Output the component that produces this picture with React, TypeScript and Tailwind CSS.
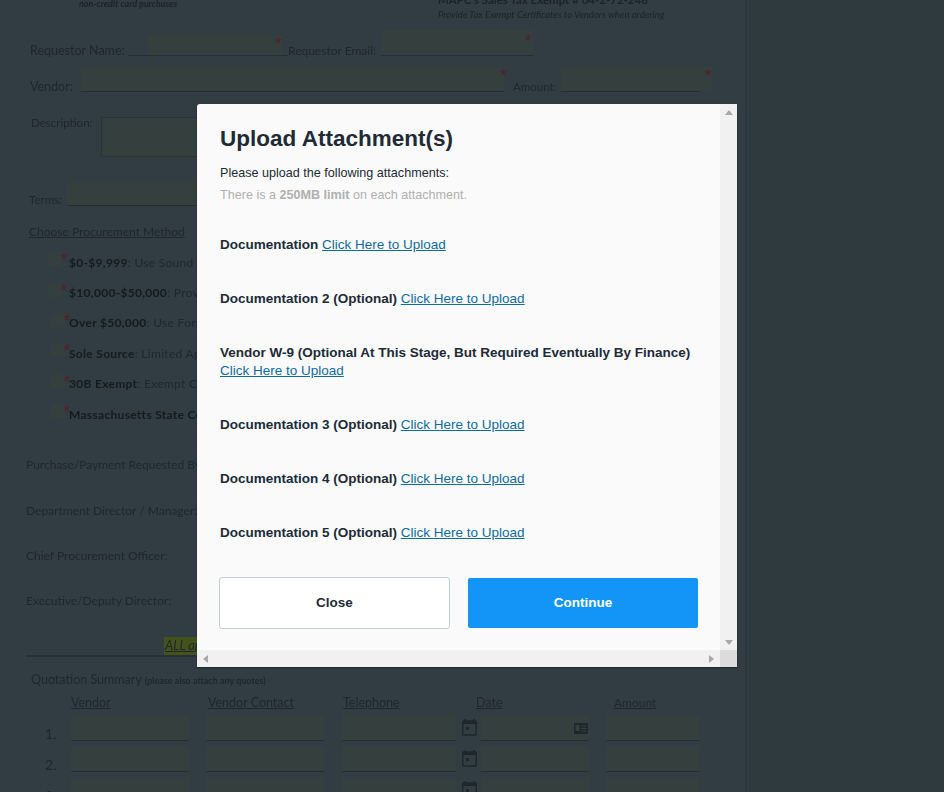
const Star = ({ className }: { className: string }) => (
  <span className={`absolute text-[19px] leading-none text-[#50222d] font-['Liberation_Sans',sans-serif] ${className}`}>*</span>
);

const Field = ({ className, children }: { className: string; children?: React.ReactNode }) => (
  <div className={`relative bg-[#35403e] border-b border-[#242f35] shrink-0 ${className}`}>{children}</div>
);

const CalendarIcon = () => (
  <svg width="15" height="17" viewBox="0 0 15 17" className="shrink-0">
    <path d="M3 0v2M12 0v2" stroke="#1d272c" strokeWidth="1.5" />
    <rect x="0.75" y="2" width="13.5" height="14" rx="1" fill="none" stroke="#1d272c" strokeWidth="1.5" />
    <rect x="1" y="2" width="13" height="3" fill="#1d272c" />
    <rect x="4" y="8" width="3" height="3" fill="#1d272c" />
  </svg>
);

const CardIcon = () => (
  <svg width="14" height="11" viewBox="0 0 14 11" className="absolute right-[1px] top-[8px]">
    <rect width="14" height="11" rx="1" fill="#1d272c" />
    <rect x="1.5" y="2" width="4" height="6" fill="#35403e" />
    <path d="M7 3h5.5M7 5.5h5.5M7 8h5.5" stroke="#35403e" />
  </svg>
);

const procurement = [
  { fill: "ml-[48px]", gap: "ml-[7px]", bold: "$0-$9,999", rest: ":  Use Sound Business Practices" },
  { fill: "ml-[48px]", gap: "ml-[7px]", bold: "$10,000-$50,000", rest: ": Provide Quotes" },
  { fill: "ml-[51px]", gap: "ml-[4px]", bold: "Over $50,000", rest: ":  Use Formal Bid" },
  { fill: "ml-[51px]", gap: "ml-[4px]", bold: "Sole Source", rest: ": Limited Application" },
  { fill: "ml-[51px]", gap: "ml-[4px]", bold: "30B Exempt", rest: ": Exempt Contract" },
  { fill: "ml-[51px]", gap: "ml-[4px]", bold: "Massachusetts State Contract", rest: "" },
];

const signers = [
  { label: "Purchase/Payment Requested By:", mt: "mt-[27.5px]" },
  { label: "Department Director / Manager:", mt: "mt-[28px]" },
  { label: "Chief Procurement Officer:", mt: "mt-[27px]" },
  { label: "Executive/Deputy Director:", mt: "mt-[27px]" },
];

const QuoteRow = ({ n, card }: { n: number; card?: boolean }) => (
  <div className="flex items-end h-[31px] text-[14px] leading-[18px]">
    <span className="w-[71px] pl-[45px] shrink-0 mb-[-2px]">{n}.</span>
    <Field className="w-[118px] h-[26px]" />
    <Field className="w-[118px] h-[26px] ml-[17px]" />
    <Field className="w-[114px] h-[26px] ml-[18px]" />
    <div className="ml-[6px] w-[19px] self-start mt-[9px] shrink-0"><CalendarIcon /></div>
    <Field className="w-[108px] h-[26px]">{card && <CardIcon />}</Field>
    <Field className="w-[93px] h-[26px] ml-[17px]" />
  </div>
);

const Arrow = ({ dir, className }: { dir: "up" | "down" | "left" | "right"; className?: string }) => {
  const points = {
    up: "0,5 4,0 8,5",
    down: "0,0 8,0 4,5",
    left: "5,0 5,8 0,4",
    right: "0,0 5,4 0,8",
  }[dir];
  const box = dir === "up" || dir === "down" ? { w: 8, h: 5 } : { w: 5, h: 8 };
  return (
    <svg width={box.w} height={box.h} viewBox={`0 0 ${box.w} ${box.h}`} className={className}>
      <polygon points={points} fill="#a9a9a9" />
    </svg>
  );
};

const Upload = ({ label, wrap }: { label: string; wrap?: boolean }) => (
  <p className="mb-[36px] whitespace-nowrap text-[13.5px] leading-[18px]">
    <b className="font-bold">{label}</b>{" "}
    {wrap && <br />}
    <a className="text-[#0f6c9f] underline" href="#">Click Here to Upload</a>
  </p>
);

export default function App() {
  return (
    <div className="relative h-[792px] w-[944px] overflow-hidden bg-[#2f3a3f] font-['Liberation_Sans',sans-serif]">
      {/* dimmed form behind the modal */}
      <div className="h-[792px] w-[746px] overflow-hidden border-r border-[#2b363b] bg-[#323c43] blur-[0.4px] font-['Lato',sans-serif] text-[12.5px] leading-[16px] text-[#1e272d]">
        <div className="flex h-[30px] items-start">
          <span className="ml-[79px] w-[359px] shrink-0 text-[9px] leading-[7px] italic font-bold text-[#1a2328]">non-credit card purchases</span>
          <div className="mt-[-6px]">
            <p className="text-[11.5px] leading-[12px] font-bold text-[#1a2328]">MAPC's Sales Tax Exempt # 04-2-72-248</p>
            <p className="mt-[3px] text-[9.5px] leading-[12px] italic text-[#1a2328]">Provide Tax Exempt Certificates to Vendors when ordering</p>
          </div>
        </div>

        <div className="flex h-[28px] items-end pl-[30px]">
          <span className="mb-[-1px] w-[98px] shrink-0 whitespace-nowrap">Requestor Name:</span>
          <div className="mb-[2px] h-[20px] w-[160px] shrink-0 relative border-b border-[#242f35]">
            <div className="absolute left-[20px] right-[6px] top-0 bottom-0 bg-[#35403e]" />
            <Star className="right-[6px] top-[-2px]" />
          </div>
          <span className="mb-[-1px] w-[93px] shrink-0 whitespace-nowrap text-[12px]">Requestor Email:</span>
          <Field className="mb-[2px] h-[26px] w-[152px]"><Star className="right-[1px] top-[1px]" /></Field>
        </div>

        <div className="mt-[8px] flex h-[28px] items-end pl-[30px]">
          <span className="mb-[-1px] w-[51px] shrink-0">Vendor:</span>
          <Field className="mb-[2px] h-[25px] w-[423px]"><Star className="right-[-3px] top-[-1px]" /></Field>
          <span className="mb-[-1px] ml-[9px] w-[48px] shrink-0 text-[11.5px]">Amount:</span>
          <Field className="mb-[2px] h-[25px] w-[139px]">
            <div className="absolute left-full top-0 h-[24px] w-[12px] bg-[#35403e]" />
            <Star className="right-[-12px] top-[-1px]" />
          </Field>
        </div>

        <div className="mt-[22px] flex h-[42px] items-start pl-[31px]">
          <span className="w-[70px] shrink-0 mt-[-1px] text-[11.5px]">Description:</span>
          <div className="mt-[1px] h-[40px] w-[400px] shrink-0 bg-[#35403e] border border-[#2a353b]" />
        </div>

        <div className="mt-[24px] flex h-[24px] items-end pl-[29px]">
          <span className="w-[38px] shrink-0 mb-[-2px] text-[11.5px]">Terms:</span>
          <Field className="h-[23px] w-[400px]" />
        </div>

        <p className="ml-[29px] mt-[18px] text-[12px] underline">Choose Procurement Method</p>

        <div className="mt-[7.5px]">
          {procurement.map((item) => (
            <div key={item.bold} className="flex h-[30.4px] items-center text-[12px] tracking-[0.3px]">
              <div className={`relative mt-[-6px] h-[13px] w-[14px] shrink-0 bg-[#35403e] ${item.fill}`}>
                <Star className="left-[12px] top-[-3px]" />
              </div>
              <span className={`${item.gap} whitespace-nowrap`}>
                <b className="text-[#141b20]">{item.bold}</b>{item.rest}
              </span>
            </div>
          ))}
        </div>

        <div className="pl-[26px] text-[12px]">
          {signers.map((row) => (
            <p key={row.label} className={`h-[18px] whitespace-nowrap ${row.mt}`}>{row.label}</p>
          ))}
        </div>

        <div className="ml-[26px] mt-[26px] w-[400px] h-[20px] border-b-2 border-[#263138] relative">
          <span className="ml-[138px] inline-block h-[18px] bg-[#44531c] italic text-[13px] underline whitespace-nowrap px-[1px]">ALL approvals</span>
        </div>

        <p className="ml-[31px] mt-[15px] h-[18px] whitespace-nowrap">
          Quotation Summary <span className="text-[9px] font-bold">(please also attach any quotes)</span>
        </p>

        <div className="mt-[4px] mb-[-2px] flex h-[18px] items-center underline">
          <span className="ml-[71px] w-[137px] shrink-0">Vendor</span>
          <span className="w-[135px] shrink-0">Vendor Contact</span>
          <span className="w-[133px] shrink-0">Telephone</span>
          <span className="w-[138px] shrink-0">Date</span>
          <span className="text-[12px]">Amount</span>
        </div>

        <QuoteRow n={1} card />
        <QuoteRow n={2} />
        <QuoteRow n={3} />
      </div>

      {/* modal */}
      <div className="absolute left-[197px] top-[104px] flex h-[563px] w-[540px] flex-col overflow-hidden rounded-tl-[3px] bg-[#fafafa] text-[#212b36] shadow-[0_1px_2px_rgba(0,0,0,0.4)]">
        <div className="flex min-h-0 flex-1">
          <div className="min-w-0 flex-1 pl-[23px]">
            <h1 className="mt-[20px] text-[22.5px] font-bold leading-[30px]">Upload Attachment(s)</h1>
            <p className="mt-[10px] text-[12.6px] leading-[18px]">Please upload the following attachments:</p>
            <p className="mt-[4px] mb-[32px] text-[12.6px] leading-[18px] text-[#b0b0b0]">
              There is a <b>250MB limit</b> on each attachment.
            </p>
            <Upload label="Documentation" />
            <Upload label="Documentation 2 (Optional)" />
            <Upload label="Vendor W-9 (Optional At This Stage, But Required Eventually By Finance)" wrap />
            <Upload label="Documentation 3 (Optional)" />
            <Upload label="Documentation 4 (Optional)" />
            <Upload label="Documentation 5 (Optional)" />
            <div className="ml-[-1px] mt-[-1px] flex items-center gap-[18px]">
              <button className="h-[52px] w-[231px] shrink-0 rounded-[3px] border border-[#c4cdd5] bg-white text-[13.5px] font-bold text-[#212b36]">Close</button>
              <button className="h-[50px] w-[230px] shrink-0 rounded-[2px] bg-[#1295f7] text-[13.5px] font-bold text-white">Continue</button>
            </div>
          </div>
          <div className="flex w-[17px] shrink-0 flex-col items-center justify-between bg-[#f1f1f1] pb-[5px] pt-[6px]">
            <Arrow dir="up" />
            <Arrow dir="down" />
          </div>
        </div>
        <div className="flex h-[17px] shrink-0 bg-[#f1f1f1]">
          <div className="flex flex-1 items-center justify-between pl-[6px] pr-[6px]">
            <Arrow dir="left" />
            <Arrow dir="right" />
          </div>
          <div className="w-[17px] shrink-0 bg-[#dcdcdc]" />
        </div>
      </div>
    </div>
  );
}
